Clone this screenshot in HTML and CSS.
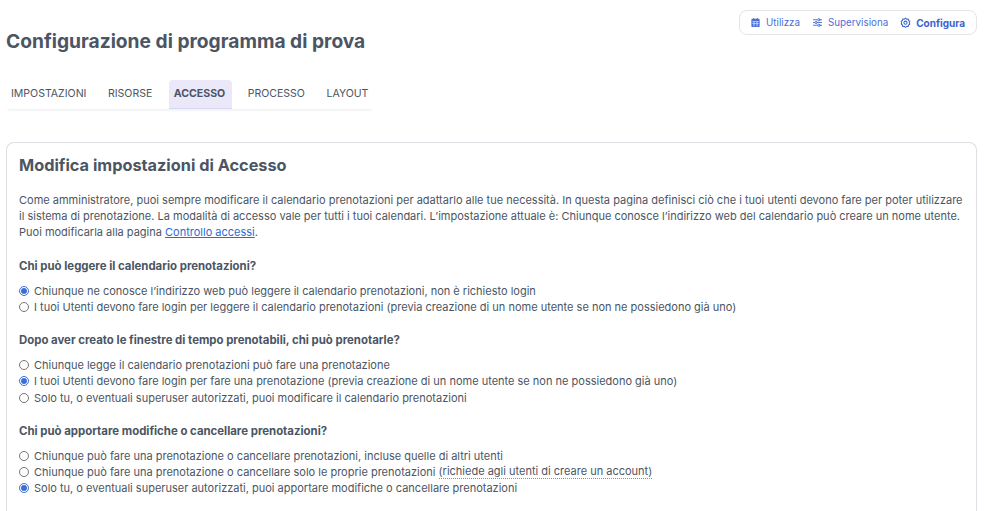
FILE: index.html
```html
<!DOCTYPE html>
<html lang="it">

<head>
  <meta charset="UTF-8">
  <title>Configurazione di programma di prova</title>
  <link rel="stylesheet" href="styles.css">
</head>

<body>
  <!-- Top links -->
  <div class="mode-bar">
    <div class="mode-box">
      <a class="mode-link" href="#">
        <svg class="mode-icon" viewBox="0 0 24 24" fill="currentColor"><path d="M7 2h2v2h6V2h2v2h2a2 2 0 0 1 2 2v14a2 2 0 0 1-2 2H5a2 2 0 0 1-2-2V6a2 2 0 0 1 2-2h2z"/><path fill="#fff" d="M5 9h14v1.500H5zM8 10.500h1.500V20H8zM14.500 10.500H16V20h-1.500zM5 14h14v1.500H5z"/></svg>
        Utilizza
      </a>
      <a class="mode-link" href="#">
        <svg class="mode-icon" viewBox="0 0 24 24" fill="none" stroke="currentColor" stroke-width="2" stroke-linecap="round"><path d="M3 6h9M18 6h3M3 12h3M12 12h9M3 18h9M18 18h3"/><circle cx="15" cy="6" r="2.500"/><circle cx="9" cy="12" r="2.500"/><circle cx="15" cy="18" r="2.500"/></svg>
        Supervisiona
      </a>
      <a class="mode-link current" href="#">
        <svg class="mode-icon" viewBox="0 0 24 24" fill="none" stroke="currentColor" stroke-width="2.200" stroke-linejoin="round"><path d="M12 2.500l2.500 2.200 3.300-.3 1 3.200 2.700 1.900-1.200 3.100 1.200 3-2.700 1.900-1 3.200-3.300-.3L12 22.500l-2.500-2.100-3.300.3-1-3.200-2.700-1.900 1.200-3-1.200-3.100 2.700-1.900 1-3.200 3.300.3z"/><circle cx="12" cy="12.500" r="3.500"/></svg>
        Configura
      </a>
    </div>
  </div>

  <h1 class="page-title">Configurazione di programma di prova</h1>

  <!-- Tabs -->
  <nav class="tabs">
    <a class="tab" href="#">IMPOSTAZIONI</a>
    <a class="tab" href="#">RISORSE</a>
    <a class="tab active" href="#">ACCESSO</a>
    <a class="tab" href="#">PROCESSO</a>
    <a class="tab" href="#">LAYOUT</a>
  </nav>

  <!-- Card -->
  <section class="card">
    <h2 class="card-title">Modifica impostazioni di Accesso</h2>
    <p class="intro">Come amministratore, puoi sempre modificare il calendario prenotazioni per adattarlo alle tue necessità. In questa pagina definisci ciò che i tuoi utenti devono fare per poter utilizzare il sistema di prenotazione. La modalità di accesso vale per tutti i tuoi calendari. L’impostazione attuale è: Chiunque conosce l’indirizzo web del calendario può creare un nome utente. Puoi modificarla alla pagina <a href="#">Controllo accessi</a>.</p>

    <div class="group">
      <h3 class="question">Chi può leggere il calendario prenotazioni?</h3>
      <label class="option"><input type="radio" name="read" checked>Chiunque ne conosce l’indirizzo web può leggere il calendario prenotazioni, non è richiesto login</label>
      <label class="option"><input type="radio" name="read">I tuoi Utenti devono fare login per leggere il calendario prenotazioni (previa creazione di un nome utente se non ne possiedono già uno)</label>
    </div>

    <div class="group">
      <h3 class="question">Dopo aver creato le finestre di tempo prenotabili, chi può prenotarle?</h3>
      <label class="option"><input type="radio" name="book">Chiunque legge il calendario prenotazioni può fare una prenotazione</label>
      <label class="option"><input type="radio" name="book" checked>I tuoi Utenti devono fare login per fare una prenotazione (previa creazione di un nome utente se non ne possiedono già uno)</label>
      <label class="option"><input type="radio" name="book">Solo tu, o eventuali superuser autorizzati, puoi modificare il calendario prenotazioni</label>
    </div>

    <div class="group">
      <h3 class="question">Chi può apportare modifiche o cancellare prenotazioni?</h3>
      <label class="option"><input type="radio" name="edit">Chiunque può fare una prenotazione o cancellare prenotazioni, incluse quelle di altri utenti</label>
      <label class="option"><input type="radio" name="edit">Chiunque può fare una prenotazione o cancellare solo le proprie prenotazioni&nbsp;<span class="hint">(richiede agli utenti di creare un account)</span></label>
      <label class="option"><input type="radio" name="edit" checked>Solo tu, o eventuali superuser autorizzati, puoi apportare modifiche o cancellare prenotazioni</label>
    </div>
  </section>
</body>

</html>
```

FILE: styles.css
```css
/* General setup */
html, body {
  height: 511px;
  overflow: hidden;
}

body {
  box-sizing: border-box;
  display: flex;
  flex-direction: column;
  margin: 0;
  padding: 0 7px 0 6px;
  background: #fff;
  font-family: 'Inter', sans-serif;
  font-size: 11px;
  color: #4b5563;
}

/* Top links */
.mode-bar {
  display: flex;
  justify-content: flex-end;
  padding-top: 10px;
}

.mode-box {
  display: flex;
  align-items: center;
  gap: 12px;
  height: 23px;
  padding: 0 11px 0 10px;
  border: 1px solid #e2e5ea;
  border-radius: 8px;
}

.mode-link {
  display: flex;
  align-items: center;
  gap: 5px;
  color: #4a6fd8;
  font-size: 9.800px;
  text-decoration: none;
}

.mode-link.current {
  color: #3b63d1;
  font-size: 10px;
  font-weight: 700;
}

.mode-icon {
  width: 11px;
  height: 11px;
}

/* Title */
.page-title {
  margin: -8px 0 0;
  height: 28px;
  font-size: 19.200px;
  line-height: 28px;
  font-weight: 700;
  color: #4b5563;
}

/* Tabs */
.tabs {
  display: flex;
  width: 367px;
  margin-top: 25px;
  box-shadow: 0 3px 3px -2px #e8eaf0;
}

.tab {
  height: 29px;
  padding: 0 5px;
  margin-right: 11.500px;
  border-radius: 4px 4px 0 0;
  color: #4b5563;
  font-size: 10.550px;
  line-height: 27px;
  text-decoration: none;
}

.tab.active {
  background: #ebe8fa;
  border-bottom: 1px solid #d9d5f5;
  height: 28px;
  padding-right: 6.500px;
  margin-right: 11px;
  font-weight: 700;
}

/* Card runs on past the bottom of the window */
.card {
  flex: 1;
  margin-top: 33px;
  padding: 11px 12px 0;
  border: 1px solid #dcdfe4;
  border-bottom: 0;
  border-radius: 8px 8px 0 0;
}

.card-title {
  margin: 0;
  font-size: 16.300px;
  line-height: 22px;
  font-weight: 700;
  color: #4b5563;
}

.intro {
  margin: 15.500px 0 1px;
  line-height: 16.400px;
}

.intro a {
  color: #2b6cd4;
}

.group {
  margin-top: 17.300px;
}

.question {
  margin: 0 0 8.500px;
  font-size: 11.400px;
  line-height: 16px;
  font-weight: 700;
  color: #4b5563;
}

.option {
  display: flex;
  align-items: center;
  height: 16.300px;
  white-space: pre;
}

.option input {
  width: 10px;
  height: 10px;
  margin: 0 5px 0 0;
  accent-color: #3b6fd8;
}

.hint {
  border-bottom: 1px dotted #8a919c;
  line-height: 13px;
}
```
